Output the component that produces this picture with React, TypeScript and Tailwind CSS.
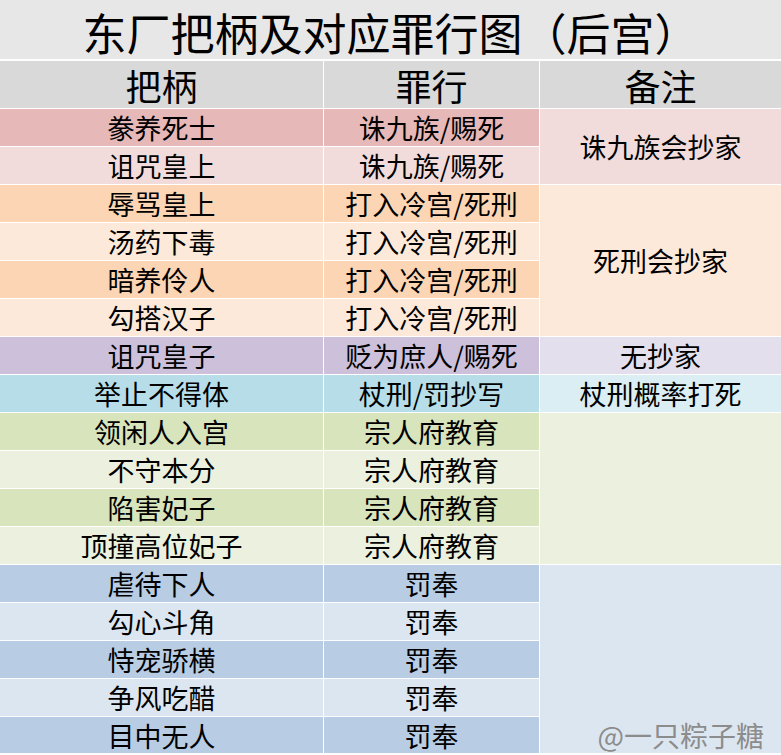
import React from "react";

type Row = { a: string; b: string; c1: string; c2: string };

const rows: Row[] = [
  { a: "豢养死士", b: "诛九族/赐死", c1: "bg-[#e6b8b7]", c2: "bg-[#e6b8b7]" },
  { a: "诅咒皇上", b: "诛九族/赐死", c1: "bg-[#f2dcdb]", c2: "bg-[#f2dcdb]" },
  { a: "辱骂皇上", b: "打入冷宫/死刑", c1: "bg-[#fcd5b4]", c2: "bg-[#fcd5b4]" },
  { a: "汤药下毒", b: "打入冷宫/死刑", c1: "bg-[#fde9d9]", c2: "bg-[#fde9d9]" },
  { a: "暗养伶人", b: "打入冷宫/死刑", c1: "bg-[#fcd5b4]", c2: "bg-[#fcd5b4]" },
  { a: "勾搭汉子", b: "打入冷宫/死刑", c1: "bg-[#fde9d9]", c2: "bg-[#fde9d9]" },
  { a: "诅咒皇子", b: "贬为庶人/赐死", c1: "bg-[#ccc0da]", c2: "bg-[#ccc0da]" },
  { a: "举止不得体", b: "杖刑/罚抄写", c1: "bg-[#b7dee8]", c2: "bg-[#b7dee8]" },
  { a: "领闲人入宫", b: "宗人府教育", c1: "bg-[#d8e4bc]", c2: "bg-[#d8e4bc]" },
  { a: "不守本分", b: "宗人府教育", c1: "bg-[#ebf1de]", c2: "bg-[#ebf1de]" },
  { a: "陷害妃子", b: "宗人府教育", c1: "bg-[#d8e4bc]", c2: "bg-[#d8e4bc]" },
  { a: "顶撞高位妃子", b: "宗人府教育", c1: "bg-[#ebf1de]", c2: "bg-[#ebf1de]" },
  { a: "虐待下人", b: "罚奉", c1: "bg-[#b8cce4]", c2: "bg-[#b8cce4]" },
  { a: "勾心斗角", b: "罚奉", c1: "bg-[#dce6f1]", c2: "bg-[#dce6f1]" },
  { a: "恃宠骄横", b: "罚奉", c1: "bg-[#b8cce4]", c2: "bg-[#b8cce4]" },
  { a: "争风吃醋", b: "罚奉", c1: "bg-[#dce6f1]", c2: "bg-[#dce6f1]" },
  { a: "目中无人", b: "罚奉", c1: "bg-[#b8cce4]", c2: "bg-[#b8cce4]" },
];

const font = { fontFamily: '"Noto Sans CJK SC", "Noto Sans", sans-serif' };

export default function App() {
  return (
    <div className="w-[781px] h-[755px] bg-white text-black overflow-hidden" style={font}>
      <div className="h-[59px] bg-[#e7e7e7] flex items-center justify-center pt-[4px] text-[44px] leading-[52px]">
        东厂把柄及对应罪行图（后宫）
      </div>
      <div className="mt-[2px] grid grid-cols-[323px_215px_241px] grid-rows-[47px_repeat(16,37px)_36px] gap-[1px]">
        <div className="bg-[#d9d9d9] flex items-center justify-center text-[36px] leading-none">把柄</div>
        <div className="bg-[#d9d9d9] flex items-center justify-center text-[36px] leading-none">罪行</div>
        <div className="bg-[#d9d9d9] flex items-center justify-center text-[36px] leading-none">备注</div>

        {rows.map((r, i) => (
          <React.Fragment key={i}>
            <div
              className={`${r.c1} col-start-1 flex items-center justify-center text-[27px] leading-none`}
              style={{ gridRowStart: i + 2 }}
            >
              {r.a}
            </div>
            <div
              className={`${r.c2} col-start-2 flex items-center justify-center text-[27px] leading-none`}
              style={{ gridRowStart: i + 2 }}
            >
              {r.b}
            </div>
          </React.Fragment>
        ))}

        <div className="col-start-3 row-start-2 row-span-2 bg-[#f2dcdb] flex items-center justify-center text-[27px] leading-none">
          诛九族会抄家
        </div>
        <div className="col-start-3 row-start-4 row-span-4 bg-[#fde9d9] flex items-center justify-center text-[27px] leading-none">
          死刑会抄家
        </div>
        <div className="col-start-3 row-start-8 bg-[#e4dfec] flex items-center justify-center text-[27px] leading-none">
          无抄家
        </div>
        <div className="col-start-3 row-start-9 bg-[#daeef3] flex items-center justify-center text-[27px] leading-none">
          杖刑概率打死
        </div>
        <div className="col-start-3 row-start-10 row-span-4 bg-[#ebf1de]" />
        <div className="col-start-3 row-start-14 row-span-5 bg-[#dce6f1] flex items-end justify-end pr-[17px] pb-[1px]">
          <span className="text-[28px] leading-[34px] text-[#8c8c8c]">@一只粽子糖</span>
        </div>
      </div>
    </div>
  );
}
